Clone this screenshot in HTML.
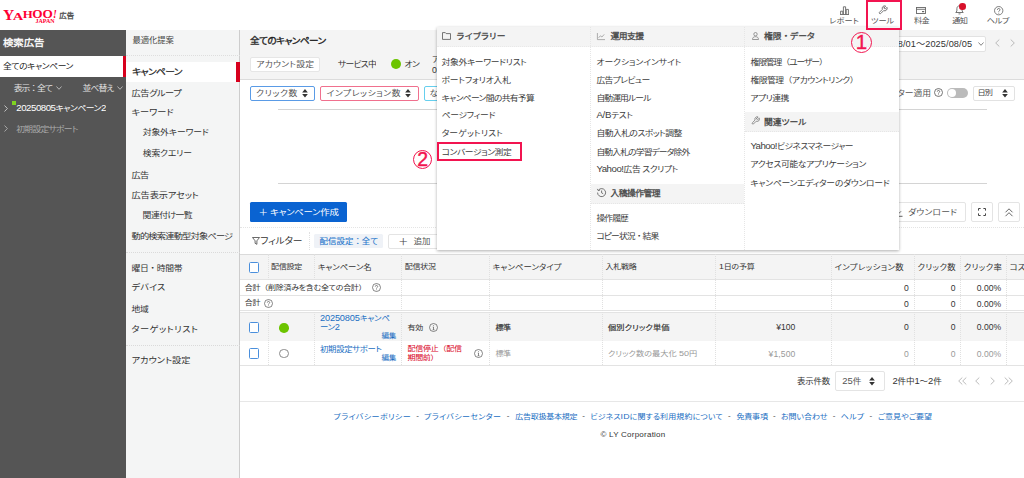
<!DOCTYPE html>
<html lang="ja"><head><meta charset="utf-8"><title>Yahoo!広告 検索広告 キャンペーン</title>
<style>
html,body{margin:0;padding:0;background:#fff;}
body{width:1024px;height:478px;overflow:hidden;position:relative;font-family:"Liberation Sans","Noto Sans CJK JP",sans-serif;font-feature-settings:"palt";-webkit-font-smoothing:antialiased;}
.t{position:absolute;white-space:nowrap;display:block;transform:scaleY(0.90);transform-origin:50% 50%;}
.b{position:absolute;box-sizing:border-box;}
svg{position:absolute;overflow:visible;}
.t em{font-style:normal;font-feature-settings:normal;}
.t u{text-decoration:none;font-size:1.1em;line-height:0;}
</style></head>
<body>
<div class="b" style="left:0.00px;top:29.60px;width:126.00px;height:448.40px;background:#555;"></div>
<div class="b" style="left:126.00px;top:29.60px;width:113.00px;height:448.40px;background:#f4f5f5;"></div>
<div class="b" style="left:239.00px;top:29.60px;width:1.00px;height:448.40px;background:#cdcdcd;"></div>
<div class="b" style="left:240.00px;top:29.50px;width:784.00px;height:50.30px;background:#f4f4f4;border-bottom:1px solid #dcdcdc;"></div>
<svg id="logo" style="left:0;top:0" width="60" height="30" viewBox="0 0 60 30" font-family="Liberation Serif, serif" font-weight="700" fill="#ff0033"><text x="3" y="19.6" font-size="14" textLength="11.3" lengthAdjust="spacingAndGlyphs">Y</text><text x="12.8" y="19.6" font-size="11.2" textLength="10.6" lengthAdjust="spacingAndGlyphs">A</text><text x="22.7" y="17.8" font-size="11.2" textLength="10" lengthAdjust="spacingAndGlyphs">H</text><text x="32.3" y="18.3" font-size="11.6" textLength="10.3" lengthAdjust="spacingAndGlyphs">O</text><text x="42.5" y="18.3" font-size="11.6" textLength="10.3" lengthAdjust="spacingAndGlyphs">O</text><text x="53" y="18" font-size="12.4" font-style="italic" textLength="3.8" lengthAdjust="spacingAndGlyphs">!</text><text x="35.5" y="23.1" font-size="6.4" textLength="19.2" lengthAdjust="spacingAndGlyphs">JAPAN</text></svg>
<span class="t" id="t1" style="top:9.60px;font-size:7.40px;line-height:11px;color:#555;-webkit-text-stroke:0.35px #555;letter-spacing:0.102px;left:59.20px;">広告</span>
<span class="t" id="t2" style="top:15.30px;font-size:8.20px;line-height:12px;color:#555;letter-spacing:0.129px;left:829.20px;">レポート</span>
<span class="t" id="t3" style="top:15.30px;font-size:8.20px;line-height:12px;color:#555;letter-spacing:-0.089px;left:871.00px;">ツール</span>
<span class="t" id="t4" style="top:15.30px;font-size:8.20px;line-height:12px;color:#555;letter-spacing:-0.795px;left:914.00px;">料金</span>
<span class="t" id="t5" style="top:15.30px;font-size:8.20px;line-height:12px;color:#555;letter-spacing:-0.695px;left:952.30px;">通知</span>
<span class="t" id="t6" style="top:15.30px;font-size:8.20px;line-height:12px;color:#555;letter-spacing:-0.433px;left:986.80px;">ヘルプ</span>
<svg style="left:839.5px;top:5.5px" width="9" height="9" viewBox="0 0 9 9" fill="none" stroke="#666" stroke-width="0.9"><path d="M0.6 8.4V5.2h2.2v3.2M3.4 8.4V0.8h2.2v7.6M6.2 8.4V3.4h2.2v5M0 8.5h9"/></svg>
<svg style="left:877.800px;top:5px" width="10" height="10" viewBox="0 0 24 24" fill="none" stroke="#666" stroke-width="2.100" stroke-linecap="round" stroke-linejoin="round"><path d="M14.7 6.3a1 1 0 0 0 0 1.4l1.6 1.6a1 1 0 0 0 1.4 0l3.770-3.770a6 6 0 0 1-7.940 7.940l-6.910 6.910a2.120 2.120 0 0 1-3-3l6.910-6.910a6 6 0 0 1 7.940-7.940l-3.760 3.760z"/></svg>
<svg style="left:916px;top:7px" width="10" height="7" viewBox="0 0 10 7" fill="none" stroke="#666" stroke-width="0.9"><rect x="0.5" y="0.5" width="9" height="6"/><path d="M0.5 2.300h9"/><path d="M6 4.600h2.200" stroke-width="1.200"/></svg>
<svg style="left:955.2px;top:5px" width="9" height="10" viewBox="0 0 9 10" fill="none" stroke="#666" stroke-width="0.9" stroke-linejoin="round"><path d="M4.5 0.8C2.900 0.8 1.900 2 1.900 3.700V6L0.800 7.500H8.200L7.100 6V3.700C7.100 2 6.100 0.800 4.500 0.800z"/><path d="M3.500 8.900h2"/></svg>
<div class="b" style="left:959.00px;top:3.40px;width:6.60px;height:6.60px;background:#d7102a;border-radius:50%;"></div>
<svg style="left:993.6px;top:6px" width="9.400" height="9.400" viewBox="0 0 9 9" fill="none" stroke="#666" stroke-width="0.8"><circle cx="4.5" cy="4.500" r="4"/><path d="M3.300 3.600a1.200 1.200 0 1 1 1.800 1c-0.400 0.300-0.600 0.500-0.600 0.900M4.500 6.500v0.700" stroke-width="0.9"/></svg>
<span class="t" id="t7" style="top:34.70px;font-size:10.40px;line-height:16px;color:#fff;-webkit-text-stroke:0.35px #fff;letter-spacing:-0.016px;left:3.00px;">検索広告</span>
<div class="b" style="left:0.00px;top:55.50px;width:122.50px;height:21.00px;background:#fff;"></div>
<div class="b" style="left:122.50px;top:55.50px;width:3.50px;height:21.00px;background:#d7001d;"></div>
<span class="t" id="t8" style="top:60.30px;font-size:8.80px;line-height:13px;color:#222;letter-spacing:-0.401px;left:3.00px;">全てのキャンペーン</span>
<span class="t" id="t9" style="top:82.10px;font-size:8.80px;line-height:13px;color:#e2e2e2;letter-spacing:-1.062px;left:13.80px;">表示<em>：</em>全て</span>
<span class="t" id="t10" style="top:82.10px;font-size:8.80px;line-height:13px;color:#e2e2e2;letter-spacing:-0.883px;left:82.40px;">並べ替え</span>
<svg style="left:55.5px;top:86.0px" width="6" height="4" viewBox="0 0 6 4" fill="none" stroke="#ccc" stroke-width="0.8"><path d="M0.500 0.500L3 3.300 5.500 0.500"/></svg>
<svg style="left:117.0px;top:86.0px" width="6" height="4" viewBox="0 0 6 4" fill="none" stroke="#ccc" stroke-width="0.8"><path d="M0.500 0.500L3 3.300 5.500 0.500"/></svg>
<svg style="left:4.0px;top:104.8px" width="4" height="7" viewBox="0 0 4 7" fill="none" stroke="#ddd" stroke-width="0.8"><path d="M0.500 0.500L3.400 3.500 0.500 6.500"/></svg>
<svg style="left:4.0px;top:125.3px" width="4" height="7" viewBox="0 0 4 7" fill="none" stroke="#bbb" stroke-width="0.8"><path d="M0.500 0.500L3.400 3.500 0.500 6.500"/></svg>
<div class="b" style="left:12.40px;top:101.40px;width:3.20px;height:3.20px;background:#7ed321;"></div>
<span class="t" id="t11" style="top:102.30px;font-size:8.80px;line-height:13px;color:#fff;letter-spacing:-0.478px;left:16.30px;"><u>20250805</u>キャンペーン<u>2</u></span>
<span class="t" id="t12" style="top:122.70px;font-size:8.80px;line-height:13px;color:#aaa;letter-spacing:-0.738px;left:16.30px;">初期設定サポート</span>
<div class="b" style="left:126.00px;top:55.20px;width:114.00px;height:0.80px;border-top:1px dotted #dedede;"></div>
<div class="b" style="left:126.00px;top:62.00px;width:110.00px;height:20.00px;background:#fff;"></div>
<div class="b" style="left:236.00px;top:62.00px;width:3.50px;height:20.00px;background:#d7001d;"></div>
<span class="t" id="t13" style="top:34.10px;font-size:8.40px;line-height:13px;color:#444;letter-spacing:-0.075px;left:132.40px;">最適化提案</span>
<span class="t" id="t14" style="top:64.20px;font-size:9.80px;line-height:15px;color:#222;-webkit-text-stroke:0.25px #222;letter-spacing:-0.703px;left:132.20px;">キャンペーン</span>
<span class="t" id="t15" style="top:85.60px;font-size:9.20px;line-height:14px;color:#333;letter-spacing:-0.442px;left:131.60px;">広告グループ</span>
<span class="t" id="t16" style="top:104.80px;font-size:9.20px;line-height:14px;color:#333;letter-spacing:-0.031px;left:131.60px;">キーワード</span>
<span class="t" id="t17" style="top:126.30px;font-size:8.80px;line-height:13px;color:#333;letter-spacing:-0.094px;left:142.70px;">対象外キーワード</span>
<span class="t" id="t18" style="top:147.10px;font-size:8.80px;line-height:13px;color:#333;letter-spacing:-0.102px;left:142.70px;">検索クエリー</span>
<span class="t" id="t19" style="top:167.60px;font-size:9.20px;line-height:14px;color:#333;letter-spacing:-0.688px;left:131.50px;">広告</span>
<span class="t" id="t20" style="top:187.60px;font-size:9.20px;line-height:14px;color:#333;letter-spacing:-0.121px;left:131.50px;">広告表示アセット</span>
<span class="t" id="t21" style="top:208.90px;font-size:8.80px;line-height:13px;color:#333;letter-spacing:-0.513px;left:142.60px;">関連付け一覧</span>
<span class="t" id="t22" style="top:228.60px;font-size:9.20px;line-height:14px;color:#333;letter-spacing:-0.759px;left:131.50px;">動的検索連動型対象ページ</span>
<div class="b" style="left:126.00px;top:252.00px;width:114.00px;height:1.00px;border-top:1px dotted #dadada;"></div>
<span class="t" id="t23" style="top:261.50px;font-size:8.80px;line-height:13px;color:#333;letter-spacing:-0.371px;left:131.50px;">曜日<em>・</em>時間帯</span>
<span class="t" id="t24" style="top:280.20px;font-size:9.20px;line-height:14px;color:#333;letter-spacing:0.160px;left:131.50px;">デバイス</span>
<span class="t" id="t25" style="top:303.10px;font-size:8.80px;line-height:13px;color:#333;letter-spacing:-0.305px;left:131.50px;">地域</span>
<span class="t" id="t26" style="top:322.00px;font-size:9.20px;line-height:14px;color:#333;letter-spacing:0.482px;left:131.50px;">ターゲットリスト</span>
<div class="b" style="left:126.00px;top:344.60px;width:114.00px;height:1.40px;border-top:1px dotted #dadada;"></div>
<span class="t" id="t27" style="top:353.20px;font-size:9.20px;line-height:14px;color:#333;letter-spacing:0.007px;left:131.50px;">アカウント設定</span>
<span class="t" id="t28" style="top:33.90px;font-size:9.60px;line-height:14px;color:#222;-webkit-text-stroke:0.35px #222;letter-spacing:-0.531px;left:250.00px;">全てのキャンペーン</span>
<div class="b" style="left:250.00px;top:57.30px;width:70.00px;height:15.00px;background:#fff;border:1px solid #e6e6e6;border-radius:2px;"></div>
<span class="t" id="t29" style="top:57.90px;font-size:8.80px;line-height:13px;color:#555;letter-spacing:0.221px;left:256.30px;">アカウント設定</span>
<span class="t" id="t30" style="top:57.90px;font-size:8.80px;line-height:13px;color:#333;letter-spacing:-0.747px;left:338.00px;">サービス中</span>
<div class="b" style="left:390.90px;top:59.30px;width:9.80px;height:9.80px;background:#6cc400;border-radius:50%;"></div>
<span class="t" id="t31" style="top:57.90px;font-size:8.80px;line-height:13px;color:#333;letter-spacing:-0.561px;left:404.50px;">オン</span>
<span class="t" id="t32" style="top:52.80px;font-size:8.80px;line-height:13px;color:#333;left:432.00px;">ア</span>
<span class="t" id="t33" style="top:63.80px;font-size:8.80px;line-height:13px;color:#333;transform:none;left:432.00px;">0</span>
<div class="b" style="left:850.00px;top:36.00px;width:136.00px;height:16.00px;background:#fff;border:1px solid #e2e2e2;border-radius:2px;"></div>
<span class="t" id="t34" style="top:36.70px;font-size:9.20px;line-height:14px;color:#333;letter-spacing:0.088px;transform:none;right:51.91px;">2025/08/01<em>～</em>2025/08/05</span>
<svg style="left:977.5px;top:42.0px" width="6" height="4" viewBox="0 0 6 4" fill="none" stroke="#666" stroke-width="0.8"><path d="M0.500 0.500L3 3.300 5.500 0.500"/></svg>
<svg style="left:995px;top:38.500px" width="5" height="8" viewBox="0 0 5 8" fill="none" stroke="#aaa" stroke-width="0.8"><path d="M4.300 0.500L0.700 4 4.300 7.500"/></svg>
<svg style="left:1009.5px;top:38.500px" width="5" height="8" viewBox="0 0 5 8" fill="none" stroke="#aaa" stroke-width="0.8"><path d="M0.700 0.500L4.300 4 0.700 7.500"/></svg>
<div class="b" style="left:250.00px;top:85.50px;width:65.00px;height:15.20px;background:#fff;border:1px solid #5a9be6;border-radius:2px;"></div>
<span class="t" id="t35" style="top:87.10px;font-size:8.80px;line-height:13px;color:#555;letter-spacing:0.653px;left:256.00px;">クリック数</span>
<svg style="left:301.8px;top:89.0px" width="6" height="8.500" viewBox="0 0 6 9" fill="#333"><path d="M3 0L6 3.600H0zM3 9L6 5.400H0z"/></svg>
<div class="b" style="left:320.40px;top:85.50px;width:98.60px;height:15.20px;background:#fff;border:1px solid #f0708e;border-radius:2px;"></div>
<span class="t" id="t36" style="top:87.10px;font-size:8.80px;line-height:13px;color:#555;letter-spacing:0.551px;left:326.70px;">インプレッション数</span>
<svg style="left:405.0px;top:89.0px" width="6" height="8.500" viewBox="0 0 6 9" fill="#333"><path d="M3 0L6 3.600H0zM3 9L6 5.400H0z"/></svg>
<div class="b" style="left:424.00px;top:85.50px;width:46.00px;height:15.20px;background:#fff;border:1px solid #66cfee;border-radius:2px;"></div>
<span class="t" id="t37" style="top:87.10px;font-size:8.80px;line-height:13px;color:#555;left:429.50px;">な</span>
<span class="t" id="t38" style="top:86.50px;font-size:8.80px;line-height:13px;color:#555;letter-spacing:-0.020px;right:93.02px;">フィルター適用</span>
<svg style="left:934px;top:88.300px" width="9" height="9" viewBox="0 0 9 9" fill="none" stroke="#555" stroke-width="0.8"><circle cx="4.500" cy="4.500" r="4"/><path d="M3.300 3.600a1.200 1.200 0 1 1 1.800 1c-0.400 0.300-0.600 0.500-0.600 0.900M4.500 6.500v0.700"/></svg>
<div class="b" style="left:946.50px;top:87.60px;width:21.00px;height:10.40px;background:#bbb;border-radius:6px;"></div>
<div class="b" style="left:947.50px;top:88.60px;width:8.50px;height:8.40px;background:#fff;border-radius:50%;"></div>
<div class="b" style="left:973.00px;top:85.50px;width:41.50px;height:15.20px;background:#fff;border:1px solid #e2e2e2;border-radius:2px;"></div>
<span class="t" id="t39" style="top:87.30px;font-size:8.20px;line-height:12px;color:#444;letter-spacing:-0.945px;left:977.40px;">日別</span>
<svg style="left:1002.0px;top:88.8px" width="6" height="8.500" viewBox="0 0 6 9" fill="#333"><path d="M3 0L6 3.600H0zM3 9L6 5.400H0z"/></svg>
<div class="b" style="left:278.00px;top:109.00px;width:709.00px;height:1.00px;border-top:1px solid #d4d4d4;"></div>
<div class="b" style="left:278.00px;top:183.20px;width:709.00px;height:1.00px;border-top:1px solid #d4d4d4;"></div>
<div class="b" style="left:250.00px;top:201.80px;width:96.50px;height:20.40px;background:#0a63d1;border-radius:1.5px;"></div>
<span class="t" id="t40" style="top:205.00px;font-size:9.40px;line-height:14px;color:#fff;letter-spacing:-0.214px;left:258.60px;">＋ キャンペーン作成</span>
<div class="b" style="left:880.00px;top:202.00px;width:85.70px;height:20.00px;background:#fff;border:1px solid #e4e4e4;border-radius:2px;"></div>
<svg style="left:894px;top:207px" width="9" height="10" viewBox="0 0 9 10" fill="none" stroke="#555" stroke-width="0.9"><path d="M4.500 0.500v6M2 4.300l2.500 2.500L7 4.300M0.500 9.300h8"/></svg>
<span class="t" id="t41" style="top:205.50px;font-size:8.80px;line-height:13px;color:#555;letter-spacing:0.167px;left:908.20px;">ダウンロード</span>
<div class="b" style="left:971.30px;top:202.00px;width:21.70px;height:20.00px;background:#fff;border:1px solid #e4e4e4;border-radius:2px;"></div>
<svg style="left:978.2px;top:208px" width="8" height="8" viewBox="0 0 8 8" fill="none" stroke="#444" stroke-width="1"><path d="M0.500 2.600V0.500h2.100M5.400 0.500h2.100v2.100M7.500 5.400v2.100H5.400M2.600 7.500H0.500V5.400"/></svg>
<div class="b" style="left:998.30px;top:202.00px;width:21.40px;height:20.00px;background:#fff;border:1px solid #e4e4e4;border-radius:2px;"></div>
<svg style="left:1005.2px;top:207.500px" width="8" height="9" viewBox="0 0 8 9" fill="none" stroke="#555" stroke-width="0.9"><path d="M0.500 4.300L4 0.800 7.500 4.300M0.500 8.200L4 4.700 7.500 8.200"/></svg>
<div class="b" style="left:240.00px;top:227.20px;width:784.00px;height:1.00px;border-top:1px dotted #e4e4e4;"></div>
<svg style="left:251.700px;top:237px" width="8" height="8" viewBox="0 0 8 8" fill="none" stroke="#444" stroke-width="0.8" stroke-linejoin="round"><path d="M0.500 0.500h7L4.900 3.800v3.500L3.100 6.300V3.800z"/></svg>
<span class="t" id="t42" style="top:233.40px;font-size:9.80px;line-height:15px;color:#333;letter-spacing:-0.184px;left:260.30px;">フィルター</span>
<div class="b" style="left:308.50px;top:232.00px;width:1.00px;height:18.00px;border-left:1px dotted #e0e0e0;"></div>
<div class="b" style="left:314.40px;top:234.00px;width:68.60px;height:13.80px;background:#eff2f7;border-radius:1.5px;"></div>
<span class="t" id="t43" style="top:234.90px;font-size:8.40px;line-height:13px;color:#2777cc;-webkit-text-stroke:0.12px #2777cc;letter-spacing:0.076px;left:319.60px;">配信設定<em>：</em>全て</span>
<div class="b" style="left:388.00px;top:233.60px;width:82.00px;height:15.10px;background:#fff;border:1px solid #e4e4e4;border-radius:2px;"></div>
<span class="t" id="t44" style="top:234.10px;font-size:10.00px;line-height:15px;color:#444;left:398.30px;">＋</span>
<span class="t" id="t45" style="top:234.50px;font-size:8.40px;line-height:13px;color:#555;letter-spacing:-0.125px;left:413.80px;">追加</span>
<div class="b" style="left:240.00px;top:253.80px;width:784.00px;height:25.80px;background:#f4f4f4;border-top:1px solid #dadada;border-bottom:1px solid #e3e3e3;"></div>
<div class="b" style="left:240.00px;top:312.00px;width:784.00px;height:29.00px;background:#f4f4f4;"></div>
<div class="b" style="left:240.00px;top:295.00px;width:784.00px;height:1.00px;border-top:1px solid #e3e3e3;"></div>
<div class="b" style="left:240.00px;top:310.20px;width:784.00px;height:1.00px;border-top:1px solid #e3e3e3;"></div>
<div class="b" style="left:240.00px;top:311.80px;width:784.00px;height:1.00px;border-top:1px solid #e3e3e3;"></div>
<div class="b" style="left:240.00px;top:365.00px;width:784.00px;height:1.00px;border-top:1px solid #e3e3e3;"></div>
<div class="b" style="left:267.50px;top:254.00px;width:1.00px;height:25.50px;border-left:1px dotted #e0e0e0;"></div>
<div class="b" style="left:267.50px;top:312.00px;width:1.00px;height:53.00px;border-left:1px dotted #e0e0e0;"></div>
<div class="b" style="left:313.90px;top:254.00px;width:1.00px;height:25.50px;border-left:1px dotted #e0e0e0;"></div>
<div class="b" style="left:313.90px;top:312.00px;width:1.00px;height:53.00px;border-left:1px dotted #e0e0e0;"></div>
<div class="b" style="left:401.30px;top:254.00px;width:1.00px;height:111.00px;border-left:1px dotted #e0e0e0;"></div>
<div class="b" style="left:489.00px;top:254.00px;width:1.00px;height:111.00px;border-left:1px dotted #e0e0e0;"></div>
<div class="b" style="left:602.00px;top:254.00px;width:1.00px;height:111.00px;border-left:1px dotted #e0e0e0;"></div>
<div class="b" style="left:715.00px;top:254.00px;width:1.00px;height:111.00px;border-left:1px dotted #e0e0e0;"></div>
<div class="b" style="left:830.70px;top:254.00px;width:1.00px;height:111.00px;border-left:1px dotted #e0e0e0;"></div>
<div class="b" style="left:913.70px;top:254.00px;width:1.00px;height:111.00px;border-left:1px dotted #e0e0e0;"></div>
<div class="b" style="left:959.90px;top:254.00px;width:1.00px;height:111.00px;border-left:1px dotted #e0e0e0;"></div>
<div class="b" style="left:1005.70px;top:254.00px;width:1.00px;height:111.00px;border-left:1px dotted #e0e0e0;"></div>
<div class="b" style="left:248.60px;top:262.20px;width:10.40px;height:10.40px;background:#fff;border:1px solid #4a8fdc;border-radius:1.5px;"></div>
<span class="t" id="t46" style="top:261.30px;font-size:8.00px;line-height:12px;color:#333;letter-spacing:-0.250px;left:271.00px;">配信設定</span>
<span class="t" id="t47" style="top:261.30px;font-size:8.40px;line-height:13px;color:#333;letter-spacing:-0.042px;left:317.70px;">キャンペーン名</span>
<span class="t" id="t48" style="top:261.30px;font-size:8.00px;line-height:12px;color:#333;letter-spacing:-0.250px;left:404.80px;">配信状況</span>
<span class="t" id="t49" style="top:261.30px;font-size:8.40px;line-height:13px;color:#333;letter-spacing:0.076px;left:492.60px;">キャンペーンタイプ</span>
<span class="t" id="t50" style="top:261.30px;font-size:8.00px;line-height:12px;color:#333;letter-spacing:-0.250px;left:605.60px;">入札戦略</span>
<span class="t" id="t51" style="top:261.30px;font-size:8.00px;line-height:12px;color:#333;letter-spacing:-0.225px;left:719.00px;"><u>1</u>日の予算</span>
<span class="t" id="t52" style="top:261.30px;font-size:8.40px;line-height:13px;color:#333;letter-spacing:0.387px;left:834.50px;">インプレッション数</span>
<span class="t" id="t53" style="top:261.30px;font-size:8.40px;line-height:13px;color:#333;letter-spacing:0.328px;left:917.50px;">クリック数</span>
<span class="t" id="t54" style="top:261.30px;font-size:8.40px;line-height:13px;color:#333;letter-spacing:0.328px;left:963.70px;">クリック率</span>
<span class="t" id="t55" style="top:261.30px;font-size:8.40px;line-height:13px;color:#333;letter-spacing:0.021px;left:1009.60px;">コスト</span>
<span class="t" id="t56" style="top:281.70px;font-size:8.00px;line-height:12px;color:#333;letter-spacing:-0.274px;left:244.80px;">合計<em>（</em>削除済みを含む全ての合計<em>）</em></span>
<svg style="left:371.5px;top:283.0px" width="9" height="9" viewBox="0 0 9 9" fill="none" stroke="#555" stroke-width="0.700"><circle cx="4.500" cy="4.500" r="4"/><path d="M3.300 3.600a1.200 1.200 0 1 1 1.800 1c-0.400 0.300-0.600 0.500-0.600 0.900M4.500 6.500v0.700"/></svg>
<span class="t" id="t57" style="top:297.30px;font-size:8.00px;line-height:12px;color:#333;letter-spacing:-0.250px;left:244.80px;">合計</span>
<svg style="left:263.5px;top:298.5px" width="9" height="9" viewBox="0 0 9 9" fill="none" stroke="#555" stroke-width="0.700"><circle cx="4.500" cy="4.500" r="4"/><path d="M3.300 3.600a1.200 1.200 0 1 1 1.800 1c-0.400 0.300-0.600 0.500-0.600 0.900M4.500 6.500v0.700"/></svg>
<span class="t" id="t58" style="top:282.20px;font-size:8.60px;line-height:13px;color:#333;letter-spacing:0.419px;transform:none;right:114.78px;">0</span>
<span class="t" id="t59" style="top:282.20px;font-size:8.60px;line-height:13px;color:#333;letter-spacing:0.419px;transform:none;right:68.18px;">0</span>
<span class="t" id="t60" style="top:282.20px;font-size:8.60px;line-height:13px;color:#333;letter-spacing:0.025px;transform:none;right:22.77px;">0.00%</span>
<span class="t" id="t61" style="top:297.80px;font-size:8.60px;line-height:13px;color:#333;letter-spacing:0.419px;transform:none;right:114.78px;">0</span>
<span class="t" id="t62" style="top:297.80px;font-size:8.60px;line-height:13px;color:#333;letter-spacing:0.419px;transform:none;right:68.18px;">0</span>
<span class="t" id="t63" style="top:297.80px;font-size:8.60px;line-height:13px;color:#333;letter-spacing:0.025px;transform:none;right:22.77px;">0.00%</span>
<span class="t" id="t64" style="top:321.40px;font-size:8.60px;line-height:13px;color:#333;letter-spacing:0.419px;transform:none;right:114.78px;">0</span>
<span class="t" id="t65" style="top:321.40px;font-size:8.60px;line-height:13px;color:#333;letter-spacing:0.419px;transform:none;right:68.18px;">0</span>
<span class="t" id="t66" style="top:321.40px;font-size:8.60px;line-height:13px;color:#333;letter-spacing:0.025px;transform:none;right:22.77px;">0.00%</span>
<span class="t" id="t67" style="top:348.00px;font-size:8.60px;line-height:13px;color:#999;letter-spacing:0.419px;transform:none;right:114.78px;">0</span>
<span class="t" id="t68" style="top:348.00px;font-size:8.60px;line-height:13px;color:#999;letter-spacing:0.419px;transform:none;right:68.18px;">0</span>
<span class="t" id="t69" style="top:348.00px;font-size:8.60px;line-height:13px;color:#999;letter-spacing:0.025px;transform:none;right:22.77px;">0.00%</span>
<div class="b" style="left:248.60px;top:322.30px;width:10.40px;height:10.40px;background:#fff;border:1px solid #4a8fdc;border-radius:1.5px;"></div>
<div class="b" style="left:279.40px;top:323.00px;width:9.60px;height:9.60px;background:#6cc400;border-radius:50%;"></div>
<span class="t" id="t70" style="top:313.50px;font-size:8.40px;line-height:9px;color:#1a6ec2;letter-spacing:-0.171px;left:320.00px;"><u>20250805</u>キャンペ</span>
<span class="t" id="t71" style="top:323.10px;font-size:8.40px;line-height:9px;color:#1a6ec2;letter-spacing:-0.302px;left:320.00px;">ーン<u>2</u></span>
<span class="t" id="t72" style="top:331.50px;font-size:7.60px;line-height:8px;color:#1a6ec2;letter-spacing:-0.294px;right:627.99px;">編集</span>
<span class="t" id="t73" style="top:321.90px;font-size:8.00px;line-height:12px;color:#333;letter-spacing:-0.250px;left:407.60px;">有効</span>
<svg style="left:428.7px;top:322.8px" width="9" height="9" viewBox="0 0 9 9" fill="none" stroke="#555" stroke-width="0.700"><circle cx="4.500" cy="4.500" r="4"/><path d="M4.500 4v2.600M3.700 6.700h1.700M3.800 4h0.800M4.500 2.300v0.700"/></svg>
<span class="t" id="t74" style="top:322.30px;font-size:8.00px;line-height:12px;color:#333;-webkit-text-stroke:0.20px #333;letter-spacing:-0.600px;left:495.60px;">標準</span>
<span class="t" id="t75" style="top:322.30px;font-size:8.20px;line-height:12px;color:#333;-webkit-text-stroke:0.20px #333;letter-spacing:0.136px;left:608.00px;">個別クリック単価</span>
<span class="t" id="t76" style="top:321.40px;font-size:8.60px;line-height:13px;color:#333;letter-spacing:0.019px;transform:none;right:228.58px;">¥100</span>
<div class="b" style="left:248.60px;top:348.30px;width:10.40px;height:10.40px;background:#fff;border:1px solid #4a8fdc;border-radius:1.5px;"></div>
<div class="b" style="left:279.40px;top:348.60px;width:9.60px;height:9.60px;background:#fff;border:1px solid #8a8a8a;border-radius:50%;"></div>
<span class="t" id="t77" style="top:344.60px;font-size:8.40px;line-height:9px;color:#1a6ec2;letter-spacing:-0.309px;left:320.00px;">初期設定サポート</span>
<span class="t" id="t78" style="top:354.00px;font-size:7.60px;line-height:8px;color:#1a6ec2;letter-spacing:-0.294px;right:627.99px;">編集</span>
<span class="t" id="t79" style="top:345.10px;font-size:8.00px;line-height:8px;color:#d9001b;letter-spacing:-0.286px;left:407.60px;">配信停止<em>（</em>配信</span>
<span class="t" id="t80" style="top:354.00px;font-size:8.00px;line-height:8px;color:#d9001b;letter-spacing:-0.375px;left:407.60px;">期間前<em>）</em></span>
<svg style="left:473.9px;top:348.7px" width="9" height="9" viewBox="0 0 9 9" fill="none" stroke="#555" stroke-width="0.700"><circle cx="4.500" cy="4.500" r="4"/><path d="M4.500 4v2.600M3.700 6.700h1.700M3.800 4h0.800M4.500 2.300v0.700"/></svg>
<span class="t" id="t81" style="top:347.50px;font-size:8.00px;line-height:12px;color:#999;letter-spacing:-0.600px;left:495.60px;">標準</span>
<span class="t" id="t82" style="top:347.50px;font-size:8.20px;line-height:12px;color:#999;letter-spacing:0.024px;left:608.00px;">クリック数の最大化 <u>50</u>円</span>
<span class="t" id="t83" style="top:348.00px;font-size:8.60px;line-height:13px;color:#999;letter-spacing:0.117px;transform:none;right:228.48px;">¥1,500</span>
<span class="t" id="t84" style="top:375.10px;font-size:8.40px;line-height:13px;color:#333;letter-spacing:-0.125px;left:797.00px;">表示件数</span>
<div class="b" style="left:834.50px;top:371.20px;width:50.20px;height:19.40px;background:#fff;border:1px solid #e4e4e4;border-radius:2px;"></div>
<span class="t" id="t85" style="top:375.10px;font-size:8.60px;line-height:13px;color:#555;letter-spacing:0.025px;left:842.20px;"><u>25</u>件</span>
<svg style="left:868.7px;top:376.5px" width="6" height="8.500" viewBox="0 0 6 9" fill="#333"><path d="M3 0L6 3.600H0zM3 9L6 5.400H0z"/></svg>
<span class="t" id="t86" style="top:375.10px;font-size:8.60px;line-height:13px;color:#333;letter-spacing:-0.146px;left:892.40px;"><u>2</u>件中<u>1</u><em>～</em><u>2</u>件</span>
<svg style="left:957.5px;top:376.700px" width="9" height="8" viewBox="0 0 9 8" fill="none" stroke="#aaa" stroke-width="0.800"><path d="M4.300 0.500L0.700 4 4.300 7.500M8.300 0.500L4.700 4 8.300 7.500"/></svg>
<svg style="left:974.5px;top:376.700px" width="5" height="8" viewBox="0 0 5 8" fill="none" stroke="#aaa" stroke-width="0.800"><path d="M4.300 0.500L0.700 4 4.300 7.500"/></svg>
<svg style="left:989.5px;top:376.700px" width="5" height="8" viewBox="0 0 5 8" fill="none" stroke="#aaa" stroke-width="0.800"><path d="M0.700 0.500L4.300 4 0.700 7.500"/></svg>
<svg style="left:1003.5px;top:376.700px" width="9" height="8" viewBox="0 0 9 8" fill="none" stroke="#aaa" stroke-width="0.800"><path d="M0.700 0.500L4.300 4 0.700 7.500M4.700 0.500L8.300 4 4.700 7.500"/></svg>
<div class="b" style="left:240.00px;top:401.00px;width:784.00px;height:1.00px;border-top:1px solid #e7e7e7;"></div>
<span class="t" id="t87" style="top:410.50px;font-size:8.00px;line-height:12px;color:#1a6ec2;letter-spacing:0.392px;left:333.50px;">プライバシーポリシー</span>
<span class="t" id="t88" style="top:410.50px;font-size:8.00px;line-height:12px;color:#1a6ec2;letter-spacing:0.349px;left:424.10px;">プライバシーセンター</span>
<span class="t" id="t89" style="top:410.50px;font-size:8.00px;line-height:12px;color:#1a6ec2;letter-spacing:-0.225px;left:515.20px;">広告取扱基本規定</span>
<span class="t" id="t90" style="top:410.50px;font-size:8.00px;line-height:12px;color:#1a6ec2;letter-spacing:0.098px;left:590.20px;">ビジネス<u>ID</u>に関する利用規約について</span>
<span class="t" id="t91" style="top:410.50px;font-size:8.00px;line-height:12px;color:#1a6ec2;letter-spacing:-0.150px;left:736.40px;">免責事項</span>
<span class="t" id="t92" style="top:410.50px;font-size:8.00px;line-height:12px;color:#1a6ec2;letter-spacing:-0.081px;left:781.00px;">お問い合わせ</span>
<span class="t" id="t93" style="top:410.50px;font-size:8.00px;line-height:12px;color:#1a6ec2;letter-spacing:0.282px;left:840.70px;">ヘルプ</span>
<span class="t" id="t94" style="top:410.50px;font-size:8.00px;line-height:12px;color:#1a6ec2;letter-spacing:0.113px;left:877.80px;">ご意見やご要望</span>
<span class="t" id="t95" style="top:410.10px;font-size:8.00px;line-height:12px;color:#444;left:417.50px;transform:translateX(-50%) scaleY(1.00);">-</span>
<span class="t" id="t96" style="top:410.10px;font-size:8.00px;line-height:12px;color:#444;left:508.00px;transform:translateX(-50%) scaleY(1.00);">-</span>
<span class="t" id="t97" style="top:410.10px;font-size:8.00px;line-height:12px;color:#444;left:583.50px;transform:translateX(-50%) scaleY(1.00);">-</span>
<span class="t" id="t98" style="top:410.10px;font-size:8.00px;line-height:12px;color:#444;left:729.40px;transform:translateX(-50%) scaleY(1.00);">-</span>
<span class="t" id="t99" style="top:410.10px;font-size:8.00px;line-height:12px;color:#444;left:774.30px;transform:translateX(-50%) scaleY(1.00);">-</span>
<span class="t" id="t100" style="top:410.10px;font-size:8.00px;line-height:12px;color:#444;left:834.00px;transform:translateX(-50%) scaleY(1.00);">-</span>
<span class="t" id="t101" style="top:410.10px;font-size:8.00px;line-height:12px;color:#444;left:870.80px;transform:translateX(-50%) scaleY(1.00);">-</span>
<span class="t" id="t102" style="top:429.00px;font-size:8.00px;line-height:12px;color:#333;letter-spacing:0.238px;left:633.00px;transform:translateX(-50%) scaleY(1.00);">© LY Corporation</span>
<div class="b" style="left:436.50px;top:26.50px;width:462.50px;height:223.80px;background:#fff;box-shadow:0 1px 3px rgba(0,0,0,0.32);"></div>
<div class="b" style="left:436.50px;top:26.50px;width:462.50px;height:20.40px;background:#f4f4f4;border-bottom:1px dotted #e9e9e9;"></div>
<div class="b" style="left:590.00px;top:26.50px;width:1.00px;height:223.80px;border-left:1px dotted #e6e6e6;"></div>
<div class="b" style="left:744.40px;top:26.50px;width:1.00px;height:223.80px;border-left:1px dotted #e6e6e6;"></div>
<div class="b" style="left:591.00px;top:184.00px;width:153.40px;height:19.70px;background:#f4f4f4;border-bottom:1px dotted #e6e6e6;"></div>
<div class="b" style="left:745.40px;top:112.00px;width:153.60px;height:20.00px;background:#f4f4f4;border-bottom:1px dotted #e6e6e6;"></div>
<svg style="left:442px;top:32.300px" width="9" height="8" viewBox="0 0 9 8" fill="none" stroke="#555" stroke-width="0.800" stroke-linejoin="round"><path d="M0.500 0.600h2.800l0.900 1h4.300v5.800h-8z"/></svg>
<span class="t" id="t103" style="top:30.10px;font-size:8.80px;line-height:13px;color:#444;-webkit-text-stroke:0.28px #444;letter-spacing:0.459px;left:456.70px;">ライブラリー</span>
<span class="t" id="t104" style="top:56.10px;font-size:8.80px;line-height:13px;color:#3c3c3c;letter-spacing:-0.331px;left:441.60px;">対象外キーワードリスト</span>
<span class="t" id="t105" style="top:73.82px;font-size:8.80px;line-height:13px;color:#3c3c3c;letter-spacing:-0.205px;left:441.60px;">ポートフォリオ入札</span>
<span class="t" id="t106" style="top:91.54px;font-size:8.80px;line-height:13px;color:#3c3c3c;letter-spacing:-0.684px;left:441.60px;">キャンペーン間の共有予算</span>
<span class="t" id="t107" style="top:109.26px;font-size:8.80px;line-height:13px;color:#3c3c3c;letter-spacing:-0.306px;left:441.60px;">ページフィード</span>
<span class="t" id="t108" style="top:126.98px;font-size:8.80px;line-height:13px;color:#3c3c3c;letter-spacing:0.129px;left:441.60px;">ターゲットリスト</span>
<span class="t" id="t109" style="top:145.70px;font-size:8.80px;line-height:13px;color:#3c3c3c;letter-spacing:-0.413px;left:441.60px;">コンバージョン測定</span>
<svg style="left:597.300px;top:32.600px" width="8" height="7" viewBox="0 0 8 7" fill="none" stroke="#999" stroke-width="0.800"><path d="M0.400 0v6.600h7.600M1.600 4.800l1.800-2 1.500 1.200 2.300-2.600"/></svg>
<span class="t" id="t110" style="top:30.10px;font-size:8.80px;line-height:13px;color:#444;-webkit-text-stroke:0.28px #444;letter-spacing:-0.501px;left:610.40px;">運用支援</span>
<span class="t" id="t111" style="top:56.10px;font-size:8.80px;line-height:13px;color:#3c3c3c;letter-spacing:-0.048px;left:596.40px;">オークションインサイト</span>
<span class="t" id="t112" style="top:73.82px;font-size:8.80px;line-height:13px;color:#3c3c3c;letter-spacing:-0.616px;left:596.40px;">広告プレビュー</span>
<span class="t" id="t113" style="top:91.54px;font-size:8.80px;line-height:13px;color:#3c3c3c;letter-spacing:-0.904px;left:596.40px;">自動運用ルール</span>
<span class="t" id="t114" style="top:109.26px;font-size:8.80px;line-height:13px;color:#3c3c3c;letter-spacing:-0.294px;left:596.40px;"><u>A/B</u>テスト</span>
<span class="t" id="t115" style="top:126.98px;font-size:8.80px;line-height:13px;color:#3c3c3c;letter-spacing:-0.533px;left:596.40px;">自動入札のスポット調整</span>
<span class="t" id="t116" style="top:145.70px;font-size:8.80px;line-height:13px;color:#3c3c3c;letter-spacing:-0.871px;left:596.40px;">自動入札の学習データ除外</span>
<span class="t" id="t117" style="top:163.42px;font-size:8.80px;line-height:13px;color:#3c3c3c;letter-spacing:-0.454px;left:596.40px;"><u>Yahoo!</u>広告 スクリプト</span>
<svg style="left:596.500px;top:188.200px" width="9.200" height="9.200" viewBox="0 0 8 8" fill="none" stroke="#555" stroke-width="0.700"><path d="M1.300 1.800A3.500 3.500 0 1 1 0.500 4M0.300 0.800l0.800 1.500 1.500-0.500M4 2.200v2l1.400 0.800"/></svg>
<span class="t" id="t118" style="top:187.30px;font-size:8.80px;line-height:13px;color:#444;-webkit-text-stroke:0.28px #444;letter-spacing:-0.533px;left:610.40px;">入稿操作管理</span>
<span class="t" id="t119" style="top:212.30px;font-size:8.80px;line-height:13px;color:#3c3c3c;letter-spacing:-0.926px;left:596.40px;">操作履歴</span>
<span class="t" id="t120" style="top:230.30px;font-size:8.80px;line-height:13px;color:#3c3c3c;letter-spacing:-0.904px;left:596.40px;">コピー状況<em>・</em>結果</span>
<svg style="left:751.600px;top:32.300px" width="7" height="8" viewBox="0 0 7 8" fill="none" stroke="#808080" stroke-width="0.800"><circle cx="3.500" cy="2.200" r="1.700"/><path d="M0.500 7.500c0-2 1.200-2.800 3-2.800s3 0.800 3 2.800z"/></svg>
<span class="t" id="t121" style="top:30.10px;font-size:8.80px;line-height:13px;color:#444;-webkit-text-stroke:0.28px #444;letter-spacing:-0.086px;left:764.00px;">権限<em>・</em>データ</span>
<span class="t" id="t122" style="top:56.10px;font-size:8.80px;line-height:13px;color:#3c3c3c;letter-spacing:-1.062px;left:750.40px;">権限管理<em>（</em>ユーザー<em>）</em></span>
<span class="t" id="t123" style="top:73.82px;font-size:8.80px;line-height:13px;color:#3c3c3c;letter-spacing:-0.500px;left:750.40px;">権限管理<em>（</em>アカウントリンク<em>）</em></span>
<span class="t" id="t124" style="top:91.54px;font-size:8.80px;line-height:13px;color:#3c3c3c;letter-spacing:-0.539px;left:750.40px;">アプリ連携</span>
<svg style="left:750.500px;top:116px" width="9.300" height="9.300" viewBox="0 0 24 24" fill="none" stroke="#777" stroke-width="2.100" stroke-linecap="round" stroke-linejoin="round"><path d="M14.7 6.3a1 1 0 0 0 0 1.4l1.6 1.6a1 1 0 0 0 1.4 0l3.770-3.770a6 6 0 0 1-7.940 7.940l-6.910 6.910a2.120 2.120 0 0 1-3-3l6.910-6.910a6 6 0 0 1 7.940-7.940l-3.760 3.760z"/></svg>
<span class="t" id="t125" style="top:115.50px;font-size:8.80px;line-height:13px;color:#444;-webkit-text-stroke:0.28px #444;letter-spacing:-0.039px;left:764.00px;">関連ツール</span>
<span class="t" id="t126" style="top:140.30px;font-size:8.80px;line-height:13px;color:#3c3c3c;letter-spacing:-0.563px;left:750.40px;"><u>Yahoo!</u>ビジネスマネージャー</span>
<span class="t" id="t127" style="top:158.02px;font-size:8.80px;line-height:13px;color:#3c3c3c;letter-spacing:-0.357px;left:750.40px;">アクセス可能なアプリケーション</span>
<span class="t" id="t128" style="top:176.74px;font-size:8.80px;line-height:13px;color:#3c3c3c;letter-spacing:-0.273px;left:750.40px;">キャンペーンエディターのダウンロード</span>
<div class="b" style="left:866.00px;top:-0.30px;width:35.50px;height:30.10px;border:2.300px solid #f21450;"></div>
<div class="b" style="left:437.40px;top:142.00px;width:84.40px;height:19.30px;border:2.400px solid #f21450;"></div>
<div class="b" style="left:851.00px;top:31.60px;width:21.00px;height:21.00px;border:1.200px solid #f21450;border-radius:50%;"></div><span class="t" id="c1" style="left:861.50px;top:22.10px;width:40px;margin-left:-20px;text-align:center;transform:none;font-size:20.50px;line-height:40px;color:#f21450;-webkit-text-stroke:0.400px #f21450;">1</span>
<div class="b" style="left:412.90px;top:149.60px;width:19.40px;height:19.40px;border:1.200px solid #f21450;border-radius:50%;"></div><span class="t" id="c2" style="left:422.60px;top:139.30px;width:40px;margin-left:-20px;text-align:center;transform:none;font-size:19.50px;line-height:40px;color:#f21450;-webkit-text-stroke:0.400px #f21450;">2</span>
</body></html>
